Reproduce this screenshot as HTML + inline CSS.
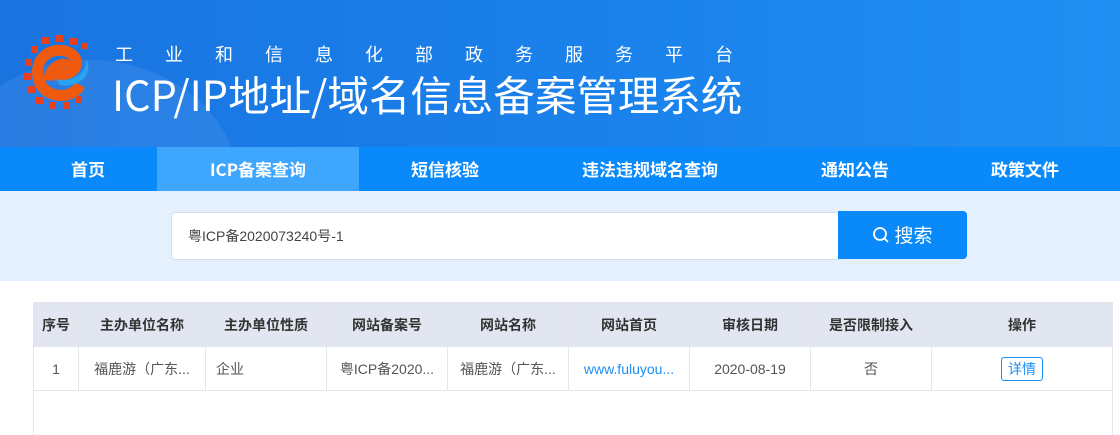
<!DOCTYPE html>
<html><head><meta charset="utf-8">
<style>
*{margin:0;padding:0;box-sizing:border-box}
body{width:1120px;height:407px;overflow:hidden;background:#fff;font-family:"Liberation Sans","Noto Sans CJK SC",sans-serif;position:relative}
.hdr{position:absolute;left:0;top:0;width:1120px;height:147px;background:linear-gradient(90deg,#1a74e0 0%,#1a80ea 50%,#1f8ff2 100%);overflow:hidden}
.hdr .glow{position:absolute;left:-60px;top:60px;width:300px;height:260px;border-radius:50%;background:rgba(255,255,255,0.07)}
.sub{position:absolute;left:115px;top:41px;color:#fff;font-size:18px;letter-spacing:32px;white-space:nowrap;font-family:"Noto Sans CJK SC",sans-serif}
.title{position:absolute;left:112px;top:64px;color:#fff;font-size:41.5px;white-space:nowrap;font-family:"Noto Sans CJK SC",sans-serif;line-height:58px}
.nav{position:absolute;left:0;top:147px;width:1120px;height:44px;background:#0a8afa}
.nav div{position:absolute;top:0;height:44px;line-height:44px;color:#fff;font-weight:bold;font-size:17px;text-align:center;font-family:"Noto Sans CJK SC",sans-serif}
.nav .act{background:#3ea6fd}
.band{position:absolute;left:0;top:191px;width:1120px;height:90px;background:#e4f0fd}
.inp{position:absolute;left:171px;top:212px;width:668px;height:48px;background:#fff;border:1px solid #d6dde6;border-radius:4px 0 0 4px;padding-left:16px;line-height:46px;font-size:14px;color:#444}
.btn{position:absolute;left:838px;top:211px;width:129px;height:48px;background:#0a8afa;border-radius:0 4px 4px 0;color:#fff;font-size:19px;line-height:48px;text-align:center;font-family:"Noto Sans CJK SC",sans-serif}
table{position:absolute;left:33px;top:302px;border-collapse:collapse;font-size:14px;color:#555;font-family:"Liberation Sans","Noto Sans CJK SC",sans-serif}
td,th{border:1px solid #e3e6ea;height:44px;text-align:center;white-space:nowrap;overflow:hidden}
th{background:#e1e6f1;color:#333;font-weight:bold;font-size:14px}
td.l{text-align:left;padding-left:10px}
.det{display:inline-block;border:1px solid #1c8ef5;color:#1c8ef5;border-radius:3px;padding:0 6px;height:24px;line-height:22px}
</style></head><body>
<div class="hdr"><div class="glow"></div>
<svg style="position:absolute;left:20px;top:33px" width="80" height="80" viewBox="0 0 80 80">
<g fill="#e8401c">
<rect x="22" y="4" width="7" height="7"/><rect x="36" y="2" width="7" height="7"/><rect x="50" y="5" width="7" height="7"/>
<rect x="11" y="13" width="7" height="7"/><rect x="5" y="26" width="7" height="7"/><rect x="4" y="40" width="7" height="7"/>
<rect x="8" y="53" width="7" height="7"/><rect x="16" y="64" width="7" height="7"/><rect x="29" y="69" width="7" height="7"/>
<rect x="43" y="69" width="7" height="7"/><rect x="55" y="63" width="7" height="7"/><rect x="62" y="10" width="6" height="6"/>
</g>
<path d="M60 52 C52 68 22 66 18 44 C14 22 36 12 50 20 C62 27 56 42 40 42 L30 42 C34 30 50 28 48 36" fill="none" stroke="#f05a0e" stroke-width="11"/>
<path d="M36 46 C52 50 68 40 66 26 C74 38 62 56 40 52 Z" fill="#29a3ee"/>
</svg>
<div class="sub">工业和信息化部政务服务平台</div>
<div class="title">ICP/IP地址/域名信息备案管理系统</div>
</div>
<div class="nav">
<div style="left:18px;width:140px">首页</div>
<div class="act" style="left:157px;width:202px">ICP备案查询</div>
<div style="left:375px;width:140px">短信核验</div>
<div style="left:550px;width:200px">违法违规域名查询</div>
<div style="left:785px;width:140px">通知公告</div>
<div style="left:955px;width:140px">政策文件</div>
</div>
<div class="band"></div>
<div class="inp">粤ICP备2020073240号-1</div>
<div class="btn"><svg width="18" height="18" viewBox="0 0 18 18" style="vertical-align:-2px;margin-right:4px"><circle cx="8" cy="8" r="6" fill="none" stroke="#fff" stroke-width="1.8"/><path d="M12.5 12.5L16 16" stroke="#fff" stroke-width="1.8"/></svg>搜索</div>
<table>
<tr><th style="width:45px">序号</th><th style="width:127px">主办单位名称</th><th style="width:121px">主办单位性质</th><th style="width:121px">网站备案号</th><th style="width:121px">网站名称</th><th style="width:121px">网站首页</th><th style="width:121px">审核日期</th><th style="width:121px">是否限制接入</th><th style="width:181px">操作</th></tr>
<tr><td>1</td><td>福鹿游（广东...</td><td class="l">企业</td><td>粤ICP备2020...</td><td>福鹿游（广东...</td><td style="color:#1c8ef5">www.fuluyou...</td><td>2020-08-19</td><td>否</td><td><span class="det">详情</span></td></tr>
<tr><td colspan="9" style="border-bottom:none"></td></tr>
</table>
</body></html>
